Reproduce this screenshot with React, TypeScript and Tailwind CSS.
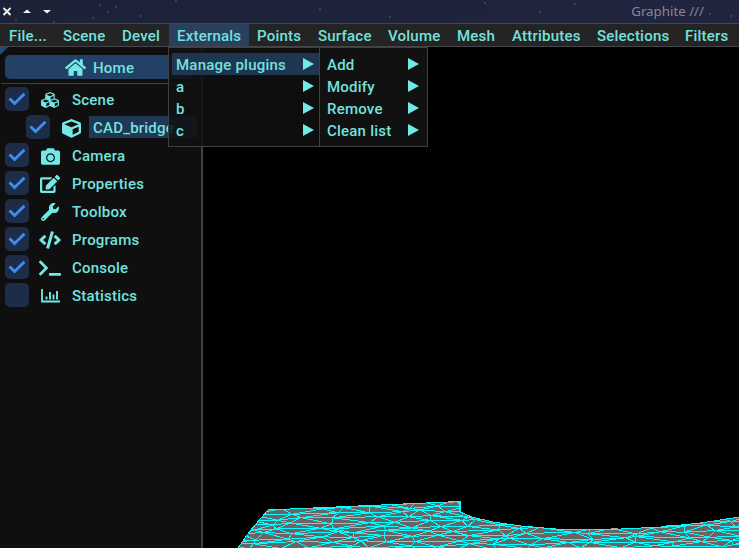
import React from "react";
import { FaHome, FaCubes, FaCube, FaCamera, FaEdit, FaWrench, FaCode, FaTerminal } from "react-icons/fa";

const menus = [
  { label: "File...", width: "w-[54px]" },
  { label: "Scene", width: "w-[59px]" },
  { label: "Devel", width: "w-[55px]" },
  { label: "Externals", width: "w-[80px]", active: true },
  { label: "Points", width: "w-[61px]" },
  { label: "Surface", width: "w-[70px]" },
  { label: "Volume", width: "w-[69px]" },
  { label: "Mesh", width: "w-[55px]" },
  { label: "Attributes", width: "w-[85px]" },
  { label: "Selections", width: "w-[88px]" },
  { label: "Filters", width: "w-[62px]" },
];

function StatsIcon({ size }: { size: number }) {
  return (
    <svg width={size} height={size} viewBox="0 0 20 20" fill="none" stroke="currentColor">
      <path d="M2 3 V15.500 H20" strokeWidth="1.8" />
      <path d="M6.500 13.500V10.500 M10 13.500V6 M13.500 13.500V8.500 M17 13.500V5" strokeWidth="1.9" />
    </svg>
  );
}

const modules = [
  { label: "Camera", Icon: FaCamera, on: true, size: 19 },
  { label: "Properties", Icon: FaEdit, on: true, size: 20 },
  { label: "Toolbox", Icon: FaWrench, on: true, size: 18 },
  { label: "Programs", Icon: FaCode, on: true, size: 22 },
  { label: "Console", Icon: FaTerminal, on: true, size: 22 },
  { label: "Statistics", Icon: StatsIcon, on: false, size: 20 },
];

const stars = [
  [100, 5], [108, 12], [116, 7], [93, 18], [141, 16], [176, 1], [16, 20], [54, 22], [485, 3], [540, 12], [575, 4], [710, 14], [731, 16], [320, 9], [390, 17],
];

function Check({ on }: { on: boolean }) {
  return (
    <div className="flex h-6 w-6 shrink-0 items-center justify-center rounded-[5px] bg-[#1d2d47]">
      {on && (
        <svg className="h-6 w-6" viewBox="0 0 24 24" fill="none" stroke="#3f8df0" strokeWidth="2.8">
          <path d="M4.500 11.500 L9.600 16.600 L19.400 6.800" />
        </svg>
      )}
    </div>
  );
}

function Arrow() {
  return (
    <svg className="h-3 w-[11px] shrink-0" viewBox="0 0 11 12">
      <path d="M0 0 L11 6 L0 12Z" fill="#73e9e6" />
    </svg>
  );
}

function MenuRow({ label, active }: { label: string; active?: boolean }) {
  return (
    <div className={`flex h-[22px] items-center justify-between pl-1 pr-[5px] ${active ? "bg-[#1f3653]" : ""}`}>
      <span className="relative top-px">{label}</span>
      <Arrow />
    </div>
  );
}

// Surface triangulation: flattened cells seen at a grazing angle.
function buildEdges() {
  let seed = 23;
  const rnd = () => {
    seed = (seed * 16807) % 2147483647;
    return seed / 2147483647;
  };
  const cols = 19;
  const rows = 11;
  const pts: number[][][] = [];
  for (let r = 0; r < rows; r++) {
    const row: number[][] = [];
    for (let c = 0; c < cols; c++) {
      row.push([
        (c - 1) * 32 + (r % 2) * 16 + (rnd() - 0.5) * 24,
        15 + r * 4.9 - c * 0.5 + (rnd() - 0.5) * 3,
      ]);
    }
    pts.push(row);
  }
  let d = "";
  const line = (a: number[], b: number[]) => {
    d += `M${a[0].toFixed(1)} ${a[1].toFixed(1)}L${b[0].toFixed(1)} ${b[1].toFixed(1)}`;
  };
  for (let r = 0; r < rows; r++) {
    for (let c = 0; c < cols; c++) {
      if (c + 1 < cols) line(pts[r][c], pts[r][c + 1]);
      if (r + 1 < rows) {
        line(pts[r][c], pts[r + 1][c]);
        const n = c + (r % 2 ? 1 : -1);
        if (n >= 0 && n < cols) line(pts[r][c], pts[r + 1][n]);
      }
    }
  }
  return d;
}

const edges = buildEdges();
const outline =
  "M7 58 L19 41 L37 20 L229 11.5 L229 22 L241 27 L262 32 L290 36 L325 39 L390 39 L430 37 L470 33 L508 27";

function Mesh() {
  return (
    <svg className="block h-[58px] w-[508px]" viewBox="0 0 508 58" shapeRendering="crispEdges">
      <defs>
        <clipPath id="surface">
          <path d={outline + " V58 Z"} />
        </clipPath>
      </defs>
      <path d={outline + " V58 Z"} fill="#666" />
      <path d={edges} clipPath="url(#surface)" stroke="#00ffff" strokeWidth="1" fill="none" />
      <path d={outline} stroke="#00ffff" strokeWidth="1" fill="none" />
      <path d="M228.5 12 V22" stroke="#00ffff" strokeWidth="2" />
      <path d="M75 18.500h9M121 16.500h8M168 14.500h8M213 12.500h10M351 39.500h14M380 38.500h7M435 35.500h5M469 32.500h3" stroke="#aaa" strokeWidth="1" />
    </svg>
  );
}

export default function App() {
  return (
    <div className="relative h-[548px] w-[739px] overflow-hidden bg-black font-['Roboto',sans-serif] text-[15px] font-medium leading-[22px] tracking-[0.22px] text-[#73e2df]">
      <header className="relative flex h-[23px] items-center justify-between bg-linear-to-r from-[#1b2237] to-[#21253f] pl-[2px] pr-[35px]">
        <svg className="h-[22px] w-[54px]" viewBox="0 0 54 22" fill="#f5f5f5">
          <path d="M1.500 7 L8.500 14 M8.500 7 L1.500 14" stroke="#f5f5f5" strokeWidth="1.8" />
          <path d="M21 12 L25 8.500 L29 12Z M41 9 H49 L45 12.500Z" />
        </svg>
        <span className="mb-px font-['Noto_Sans',sans-serif] text-[13.300px] font-normal tracking-normal text-[#858897]">Graphite ///</span>
        <svg className="absolute left-0 top-0 h-[23px] w-[739px]" viewBox="0 0 739 23">
          {stars.map(([x, y], i) => (
            <circle key={i} cx={x} cy={y} r="1.2" fill="#8994b5" opacity="0.25" />
          ))}
        </svg>
      </header>

      <nav className="flex h-6 border-y border-[#45454c] bg-[#242424] pl-px">
        {menus.map((m) => (
          <div key={m.label} className={`h-[22px] shrink-0 whitespace-nowrap pl-2 ${m.width} ${m.active ? "bg-[#29415f]" : ""}`}>
            <span className="relative top-px">{m.label}</span>
          </div>
        ))}
      </nav>

      <main className="flex h-[501px]">
        <aside className="relative w-[203px] shrink-0 border-r-2 border-[#3f3f46] bg-[#0f0f0f] pt-2">
          <svg className="absolute left-0 top-0 h-[9px] w-[9px]" viewBox="0 0 9 9">
            <path d="M0 0H8L0 8Z" fill="#254a78" />
          </svg>
          <div className="ml-[5px] flex h-6 w-[187px] items-center rounded-[5px] bg-[#234066] pl-[60px]">
            <FaHome className="mt-px h-[19px] w-[21px] text-[#73e9e6]" />
            <span className="relative top-px ml-[7px]">Home</span>
          </div>
          <div className="ml-px mt-1 h-px w-[196px] bg-[#3f3f46]" />
          <div className="mt-1 flex flex-col gap-1 pl-[5px]">
            <div className="flex h-6 items-center -mt-px">
              <Check on />
              <FaCubes className="ml-[11px] mt-[2px] h-[18px] w-5 text-[#73e9e6]" />
              <span className="relative top-px ml-3">Scene</span>
            </div>
            <div className="flex h-6 items-center pl-[21px]">
              <Check on />
              <FaCube className="ml-3 mt-[2px] h-[19px] w-[19px] text-[#73e9e6]" />
              <span className="ml-2 h-[22px] w-[108px] bg-[#203856] pl-1 leading-6">CAD_bridge</span>
            </div>
            {modules.map(({ label, Icon, on, size }) => (
              <div key={label} className="flex h-6 items-center">
                <Check on={on} />
                <div className="ml-[9px] mt-[2px] flex w-6 justify-center text-[#73e9e6]">
                  <Icon size={size} />
                </div>
                <span className="relative top-px ml-[10px]">{label}</span>
              </div>
            ))}
          </div>
        </aside>
        <section className="flex flex-1 items-end justify-end bg-black">
          <Mesh />
        </section>
      </main>

      <div className="absolute left-[168px] top-[47px] flex">
        <div className="h-[100px] w-[152px] border border-[#3f3f46] bg-[#111111]/85 pl-[3px] pt-[5px]">
          <MenuRow label="Manage plugins" active />
          <MenuRow label="a" />
          <MenuRow label="b" />
          <MenuRow label="c" />
        </div>
        <div className="-ml-px h-[100px] w-[109px] border border-[#3f3f46] bg-[#111111] pl-[3px] pr-[3px] pt-[5px]">
          <MenuRow label="Add" />
          <MenuRow label="Modify" />
          <MenuRow label="Remove" />
          <MenuRow label="Clean list" />
        </div>
      </div>
    </div>
  );
}
